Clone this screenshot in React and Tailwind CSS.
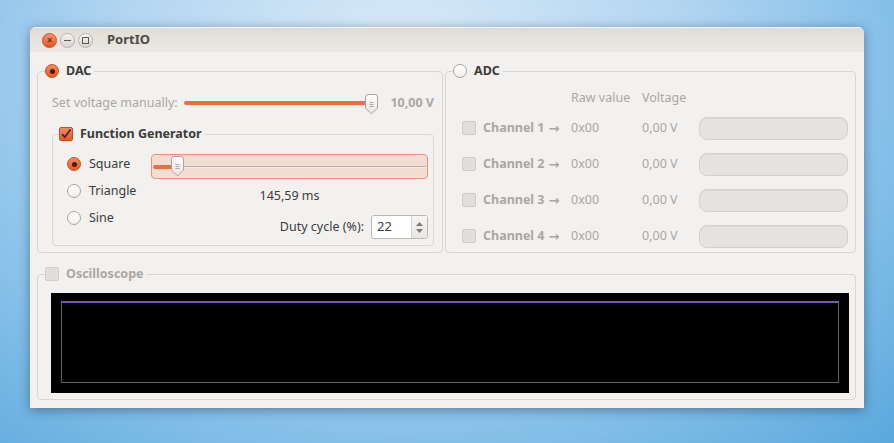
import React from "react";

const Radio = ({ checked }) => {
  if (checked) {
    return (
      <span className="flex h-[14px] w-[14px] shrink-0 items-center justify-center rounded-full border border-[#c8501f] bg-gradient-to-b from-[#f58a5e] to-[#e2592a]">
        <span className="h-[5px] w-[5px] rounded-full bg-[#4a1c0d]" />
      </span>
    );
  }
  return (
    <span className="h-[14px] w-[14px] shrink-0 rounded-full border border-[#aaa59f] bg-gradient-to-b from-white to-[#f1efed]" />
  );
};

const Checkbox = ({ checked }) => {
  if (checked) {
    return (
      <span className="flex h-[14px] w-[14px] shrink-0 items-center justify-center rounded-[2px] border border-[#c8501f] bg-gradient-to-b from-[#f58a5e] to-[#e2592a]">
        <svg width="12" height="12" viewBox="0 0 12 12">
          <path d="M2 6.2 L4.8 9.2 L10.5 1.5" fill="none" stroke="#4a2516" strokeWidth="1.8" />
        </svg>
      </span>
    );
  }
  return <span className="h-[14px] w-[14px] shrink-0 rounded-[2px] border border-[#d0ccc7] bg-[#e1dfdc]" />;
};

const Handle = () => (
  <svg width="13" height="21" viewBox="0 0 13 21">
    <defs>
      <linearGradient id="hg" x1="0" y1="0" x2="0" y2="1">
        <stop offset="0" stopColor="#ffffff" />
        <stop offset="1" stopColor="#e6e3e0" />
      </linearGradient>
    </defs>
    <path d="M3 0.5 h7 a2.5 2.5 0 0 1 2.5 2.5 v11 l-6 6 l-6 -6 v-11 a2.5 2.5 0 0 1 2.5 -2.5 z" fill="url(#hg)" stroke="#a9a49e" />
    <path d="M4.5 8.5 h4 M4.5 10.5 h4 M4.5 12.5 h4" stroke="#9c9892" strokeWidth="0.8" />
  </svg>
);

const WinButton = ({ kind }) => {
  if (kind === "close") {
    return (
      <span className="flex h-[15px] w-[15px] items-center justify-center rounded-full border border-[#c4521f] bg-gradient-to-b from-[#f7936a] to-[#e0561f] text-[10px] leading-none text-[#3f2418]">
        ×
      </span>
    );
  }
  return (
    <span className="flex h-[15px] w-[15px] items-center justify-center rounded-full border border-[#b7b2ab] bg-gradient-to-b from-[#f7f6f4] to-[#d6d3ce]">
      {kind === "min" ? (
        <span className="h-[1px] w-[7px] bg-[#5c5852]" />
      ) : (
        <span className="h-[7px] w-[7px] border border-[#5c5852]" />
      )}
    </span>
  );
};

const channels = [1, 2, 3, 4];

export default function App() {
  return (
    <div className="h-[443px] w-[894px] overflow-hidden bg-[radial-gradient(ellipse_at_45%_15%,#dcecf8_0%,#b4d6f1_40%,#86c0e9_70%,#5aa8dc_100%)] pl-[30px] pt-[27px] font-['Noto_Sans',sans-serif] text-[12.5px] text-[#3c3c3c]">
      <div className="flex h-[381px] w-[834px] flex-col overflow-hidden rounded-t-[6px] bg-[#f2f1f0] shadow-[0_2px_12px_rgba(20,40,70,0.45)]">
        {/* title bar */}
        <div className="flex h-[25px] shrink-0 items-center border-t border-[#f6f4f1] bg-gradient-to-b from-[#e0dcd5] to-[#ece9e5] pl-[12px]">
          <div className="flex gap-[3px]">
            <WinButton kind="close" />
            <WinButton kind="min" />
            <WinButton kind="max" />
          </div>
          <span className="ml-[14px] text-[13px] font-bold text-[#4c4b48]">PortIO</span>
        </div>

        {/* body */}
        <div className="flex flex-1 flex-col pb-[8px] pl-[7px] pr-[8px] pt-[12px]">
          <div className="flex h-[189px] gap-[2px]">
            {/* DAC */}
            <fieldset className="w-[406px] rounded-[4px] border border-[#dad7d3] p-0">
              <legend className="ml-[7px] flex h-[14px] items-center gap-[7px] pr-[3px] leading-[14px]">
                <Radio checked />
                <span className="font-bold text-[#3c3b38]">DAC</span>
              </legend>
              <div className="pl-[14px] pr-[8px] pt-[15px]">
                <div className="flex h-[20px] items-center text-[#aba7a2]">
                  <span>Set voltage manually:</span>
                  <div className="relative ml-auto flex h-[20px] w-[194px] items-center">
                    <div className="h-[4px] w-[188px] rounded-full bg-[#e9713f]" />
                    <div className="absolute right-0 top-[1px]">
                      <Handle />
                    </div>
                  </div>
                  <span className="ml-[12px] font-bold">10,00 V</span>
                </div>

                <fieldset className="mt-[14px] rounded-[4px] border border-[#dad7d3] p-0">
                  <legend className="ml-[6px] flex h-[14px] items-center gap-[7px] pr-[3px] leading-[14px]">
                    <Checkbox checked />
                    <span className="font-bold text-[#3c3b38]">Function Generator</span>
                  </legend>
                  <div className="flex pb-[6px] pl-[14px] pr-[5px] pt-[13px]">
                    <div className="flex w-[84px] flex-col gap-[7px]">
                      {["Square", "Triangle", "Sine"].map((label, i) => (
                        <div key={label} className="flex h-[20px] items-center gap-[8px]">
                          <Radio checked={i === 0} />
                          <span>{label}</span>
                        </div>
                      ))}
                    </div>
                    <div className="flex w-[277px] flex-col">
                      <div className="relative flex h-[25px] items-center rounded-[4px] border border-[#ec9472] bg-[#f3ddd3] px-[1px]">
                        <div className="h-[4px] w-[24px] rounded-full bg-[#e9713f]" />
                        <div className="h-[2px] flex-1 border-t border-[#b9b0aa] bg-[#f7eae4]" />
                        <div className="absolute left-[19px] top-[1px]">
                          <Handle />
                        </div>
                      </div>
                      <div className="mt-[9px] text-center leading-[16px]">145,59 ms</div>
                      <div className="mt-[11px] flex items-center justify-end gap-[7px]">
                        <span>Duty cycle (%):</span>
                        <div className="flex h-[24px] w-[57px] rounded-[3px] border border-[#bdb8b2] bg-white">
                          <span className="flex flex-1 items-center pl-[5px] text-[13px]">22</span>
                          <div className="flex w-[16px] flex-col items-center justify-center gap-[3px] border-l border-[#d8d4cf] bg-gradient-to-b from-[#f7f6f4] to-[#e9e7e4]">
                            <svg width="7" height="4" viewBox="0 0 7 4">
                              <path d="M0 4 L3.5 0 L7 4 z" fill="#7d7973" />
                            </svg>
                            <svg width="7" height="4" viewBox="0 0 7 4">
                              <path d="M0 0 L3.5 4 L7 0 z" fill="#7d7973" />
                            </svg>
                          </div>
                        </div>
                      </div>
                    </div>
                  </div>
                </fieldset>
              </div>
            </fieldset>

            {/* ADC */}
            <fieldset className="w-[411px] rounded-[4px] border border-[#dad7d3] p-0">
              <legend className="ml-[7px] flex h-[14px] items-center gap-[7px] pr-[3px] leading-[14px]">
                <Radio />
                <span className="font-bold text-[#3c3b38]">ADC</span>
              </legend>
              <div className="pl-[16px] pt-[12px] text-[#aba7a2]">
                <div className="grid grid-cols-[21px_88px_71px_57px_149px] leading-[16px]">
                  <span />
                  <span />
                  <span>Raw value</span>
                  <span>Voltage</span>
                  <span />
                </div>
                <div className="mt-[10px] flex flex-col gap-[12px]">
                  {channels.map((n) => (
                    <div key={n} className="grid h-[24px] grid-cols-[21px_88px_71px_57px_149px] items-center">
                      <Checkbox />
                      <span className="flex items-center gap-[4px] font-bold">
                        <span>Channel {n}</span>
                        <span className="font-['DejaVu_Sans',sans-serif] text-[13px] leading-none">→</span>
                      </span>
                      <span>0x00</span>
                      <span>0,00 V</span>
                      <div className="h-[23px] rounded-[8px] border border-[#d4d1cd] bg-[#e4e3e1] shadow-[inset_0_1px_0_rgba(0,0,0,0.04)]" />
                    </div>
                  ))}
                </div>
              </div>
            </fieldset>
          </div>

          {/* Oscilloscope */}
          <fieldset className="mt-[14px] rounded-[4px] border border-[#dad7d3] p-0">
            <legend className="ml-[7px] flex h-[14px] items-center gap-[7px] pr-[3px] leading-[14px]">
              <Checkbox />
              <span className="font-bold text-[#aba7a2]">Oscilloscope</span>
            </legend>
            <div className="pb-[6px] pl-[13px] pr-[6px] pt-[12px]">
              <div className="flex h-[100px] flex-col bg-black px-[10px] pb-[10px] pt-[8px]">
                <div className="h-[2px] bg-[#7559ad]" />
                <div className="flex-1 border border-t-0 border-[#626262]" />
              </div>
            </div>
          </fieldset>
        </div>
      </div>
    </div>
  );
}
